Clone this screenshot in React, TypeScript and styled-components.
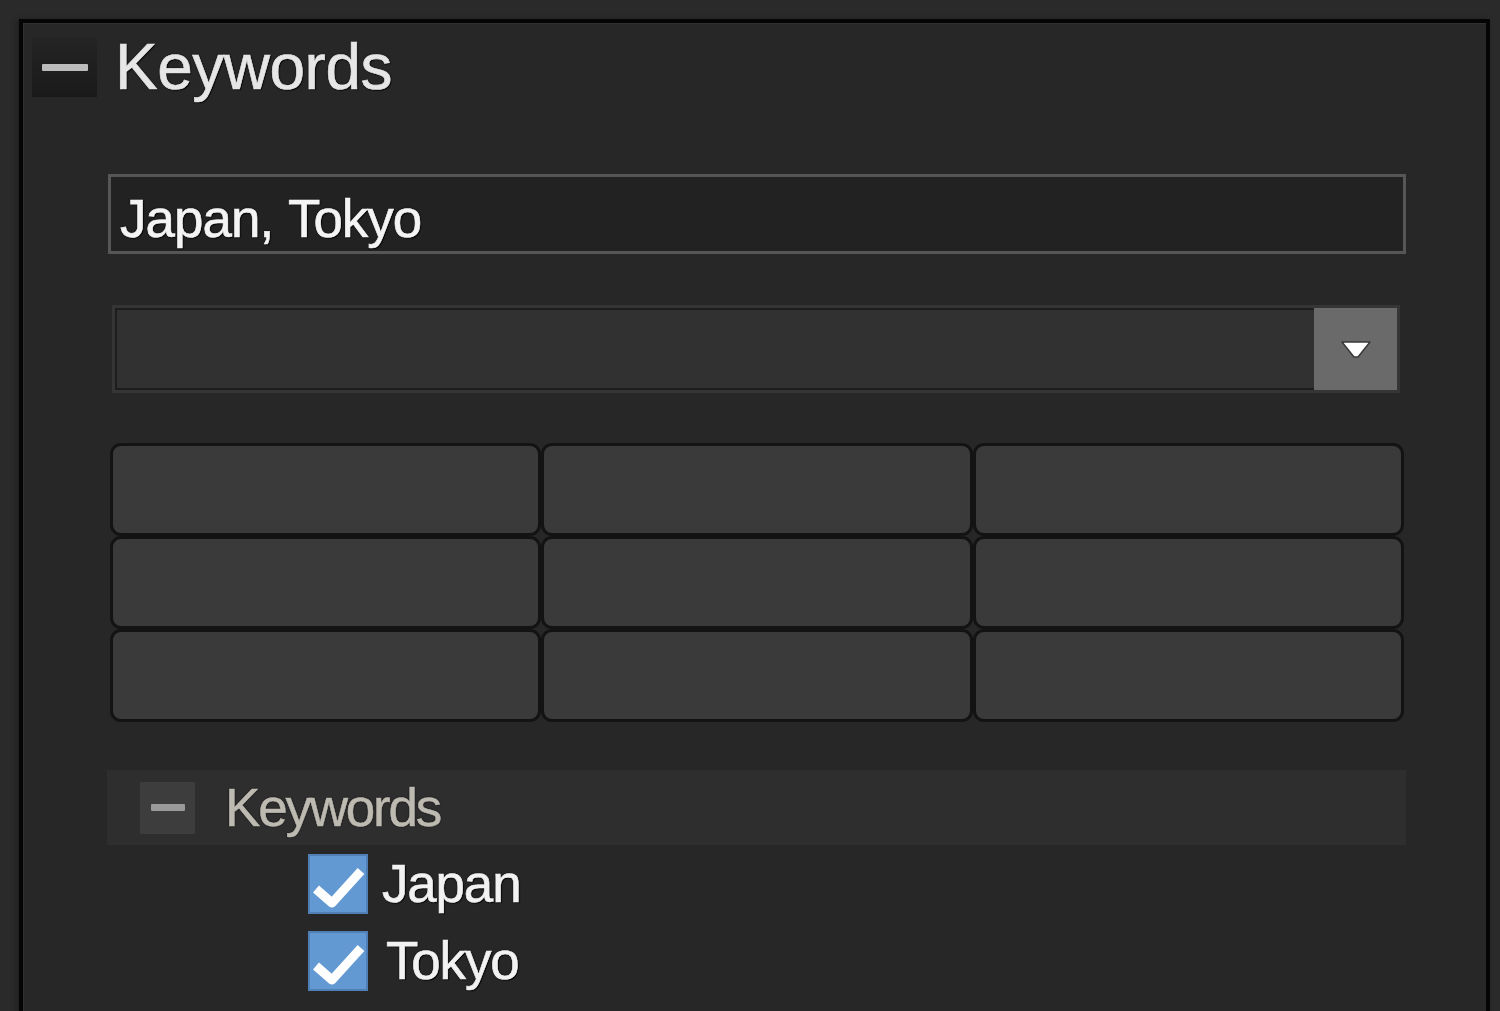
import React from "react";
import styled, { createGlobalStyle } from "styled-components";

const GlobalStyle = createGlobalStyle`
  html, body {
    margin: 0;
    padding: 0;
    background: #2a2a2a;
    overflow: hidden;
  }
  body {
    font-family: "Liberation Sans", Arial, sans-serif;
  }
`;

const Page = styled.div`
  padding: 19px 0 0 19px;
  height: 1011px;
  box-sizing: border-box;
`;

const Panel = styled.section`
  width: 1471px;
  min-height: 1000px;
  box-sizing: border-box;
  background: #272727;
  border: 4px solid #050505;
  border-bottom: none;
  box-shadow: inset 1px 1px 0 #303030, -3px 0 4px #222;
  padding-top: 14px;
`;

const Header = styled.div`
  display: flex;
  align-items: center;
  padding-left: 9px;
  gap: 18px;
  height: 60px;
`;

const CollapseBox = styled.div<{ $size: number; $h: number; $bg: string; $bar: string; $barW: number }>`
  width: ${(p) => p.$size}px;
  height: ${(p) => p.$h}px;
  flex: none;
  display: flex;
  align-items: center;
  justify-content: center;
  background: ${(p) => p.$bg};
  &::after {
    content: "";
    display: block;
    width: ${(p) => p.$barW}px;
    height: 7px;
    background: ${(p) => p.$bar};
    border-radius: 1px;
  }
`;

const Title = styled.h2`
  margin: 0;
  font-weight: normal;
  font-size: 64px;
  line-height: 64px;
  letter-spacing: -0.5px;
  color: #e6e6e6;
  -webkit-text-stroke: 0.6px #e6e6e6;
  text-shadow: 0 0 2px #000, 1px 1px 1px #000;
`;

const Content = styled.div`
  padding: 0 80px 0 85px;
`;

const TextField = styled.div`
  margin-top: 77px;
  height: 80px;
  box-sizing: border-box;
  border: 3px solid #565656;
  background: #222222;
  padding: 8px 0 0 9px;
  font-size: 53px;
  line-height: 68px;
  letter-spacing: -1px;
  word-spacing: 2px;
  color: #f4f4f4;
  -webkit-text-stroke: 0.6px #f4f4f4;
  text-shadow: 0 0 2px #000, 1px 1px 1px #000;
`;

const Select = styled.div`
  margin: 51px 6px 0 4px;
  height: 88px;
  box-sizing: border-box;
  border: 3px solid #353535;
  display: flex;
`;

const SelectField = styled.div`
  flex: 1;
  background: #313131;
  border: 2px solid #1d1d1d;
  border-right: none;
`;

const SelectButton = styled.div`
  width: 83px;
  flex: none;
  background: #6a6a6a;
  display: flex;
  align-items: center;
  justify-content: center;
`;

const ButtonGrid = styled.div`
  margin: 50px 2px 0 2px;
  display: grid;
  grid-template-columns: repeat(3, 1fr);
  grid-auto-rows: 93px;
`;

const GridButton = styled.button`
  border: 3px solid #131313;
  border-radius: 11px;
  background: #3a3a3a;
  padding: 0;
  margin: 0;
`;

const TreeHeader = styled.div`
  margin: 48px 0 0 -1px;
  height: 75px;
  background: #2e2e2e;
  display: flex;
  align-items: center;
  padding-left: 33px;
  gap: 30px;
`;

const TreeLabel = styled.span`
  font-size: 53px;
  line-height: 75px;
  letter-spacing: -2.2px;
  color: #bdbab2;
  -webkit-text-stroke: 0.5px #bdbab2;
  text-shadow: 0 0 2px #000;
`;

const CheckList = styled.div`
  padding: 0 0 0 200px;
`;

const CheckRow = styled.label`
  display: flex;
  align-items: center;
  height: 77px;
  gap: 14px;
`;

const CheckBox = styled.span`
  width: 60px;
  height: 60px;
  flex: none;
  box-sizing: border-box;
  background: #6399d3;
  border: 2px solid #4f7fb4;
  display: flex;
`;

const CheckText = styled.span<{ $indent?: number }>`
  margin-left: ${(p) => p.$indent ?? 0}px;
  font-size: 53px;
  line-height: 60px;
  letter-spacing: -1.2px;
  color: #f2f2f2;
  -webkit-text-stroke: 0.6px #f2f2f2;
  text-shadow: 0 0 2px #000, 1px 1px 1px #000;
`;

const Check = () => (
  <svg width="56" height="56" viewBox="0 0 56 56">
    <polyline points="6,33 22,47 51,15" fill="none" stroke="#ffffff" strokeWidth="9" strokeLinejoin="round" />
  </svg>
);

const keywords = [
  { label: "Japan", indent: 0 },
  { label: "Tokyo", indent: 4 },
];

export default function App() {
  return (
    <Page>
      <GlobalStyle />
      <Panel>
        <Header>
          <CollapseBox $size={65} $h={60} $bg="linear-gradient(#242424, #1a1a1a)" $bar="#bcbcbc" $barW={46} />
          <Title>Keywords</Title>
        </Header>
        <Content>
          <TextField>Japan, Tokyo</TextField>
          <Select>
            <SelectField />
            <SelectButton>
              <svg width="30" height="22" viewBox="0 0 30 22">
                <polygon points="1,4 29,4 17,19 13,19" fill="#ffffff" stroke="#3a3a3a" strokeWidth="1.5" strokeLinejoin="round" />
              </svg>
            </SelectButton>
          </Select>
          <ButtonGrid>
            {Array.from({ length: 9 }).map((_, i) => (
              <GridButton key={i} />
            ))}
          </ButtonGrid>
          <TreeHeader>
            <CollapseBox $size={55} $h={52} $bg="#3d3d3d" $bar="#9a9a9a" $barW={34} />
            <TreeLabel>Keywords</TreeLabel>
          </TreeHeader>
          <CheckList>
            {keywords.map((k) => (
              <CheckRow key={k.label}>
                <CheckBox>
                  <Check />
                </CheckBox>
                <CheckText $indent={k.indent}>{k.label}</CheckText>
              </CheckRow>
            ))}
          </CheckList>
        </Content>
      </Panel>
    </Page>
  );
}
